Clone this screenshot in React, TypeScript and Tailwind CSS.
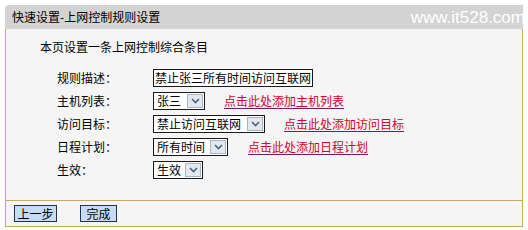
const cjk = "font-['SimSun','Noto_Sans_CJK_SC',sans-serif]";

function Chevron() {
  return (
    <svg width="9" height="6" viewBox="0 0 9 6" fill="none">
      <path d="M1 1l3.5 3.5L8 1" stroke="#4d6185" strokeWidth="1.6" />
    </svg>
  );
}

function FakeSelect({ value, width }: { value: string; width: string }) {
  return (
    <div
      className={`flex h-[18px] items-center justify-between border border-[#1a1a1a] bg-white pl-[3px] pr-px ${width}`}
    >
      <span className="text-[12px] leading-none text-black">{value}</span>
      <span className="flex h-[14px] w-[16px] items-center justify-center border border-[#a7b4c4] bg-[#e3e8ee]">
        <Chevron />
      </span>
    </div>
  );
}

function AddLink({ children, ml }: { children: string; ml: string }) {
  return (
    <a
      href="#"
      className={`${ml} text-[12px] leading-none text-[#d8002a] underline decoration-[#6b1f6f] underline-offset-2`}
    >
      {children}
    </a>
  );
}

function Row({ label, children }: { label: string; children: React.ReactNode }) {
  return (
    <div className="flex h-[23px] items-center">
      <div className="w-[96px] text-[12px] leading-none text-black">{label}</div>
      {children}
    </div>
  );
}

export default function App() {
  return (
    <div className={`min-h-[230px] bg-white pl-[5px] pt-[5px] ${cjk}`}>
      <div className="w-[518px]">
        <div className="flex h-[24px] items-center justify-between rounded-tl-[4px] bg-[#d3d3d3] pl-[7px]">
          <span className="text-[12px] text-black">快速设置-上网控制规则设置</span>
          <span className="mr-[-2px] font-['Liberation_Sans',Arial,sans-serif] text-[17px] leading-none text-white">
            www.it528.com
          </span>
        </div>
        <div className="border-x border-b border-[#c9a86a] bg-[#f5f5f5]">
          <div className="h-[171px] pl-[34px] pt-[9px]">
            <div className="flex h-[18px] items-center text-[12px] text-black">本页设置一条上网控制综合条目</div>
            <div className="mt-[10px] pl-[17px]">
              <Row label="规则描述：">
                <div className="flex h-[18px] w-[160px] items-center overflow-hidden border border-[#1a1a1a] bg-white pl-px text-[12px] leading-none text-black">
                  禁止张三所有时间访问互联网
                </div>
              </Row>
              <Row label="主机列表：">
                <FakeSelect value="张三" width="w-[52px]" />
                <AddLink ml="ml-[19px]">点击此处添加主机列表</AddLink>
              </Row>
              <Row label="访问目标：">
                <FakeSelect value="禁止访问互联网" width="w-[112px]" />
                <AddLink ml="ml-[19px]">点击此处添加访问目标</AddLink>
              </Row>
              <Row label="日程计划：">
                <FakeSelect value="所有时间" width="w-[75px]" />
                <AddLink ml="ml-[20px]">点击此处添加日程计划</AddLink>
              </Row>
              <Row label="生效：">
                <FakeSelect value="生效" width="w-[50px]" />
              </Row>
            </div>
          </div>
          <div className="flex h-[26px] items-center gap-[23px] border-t border-[#c9a86a] pl-[8px]">
            <button className="h-[17px] w-[43px] border border-[#1f3550] bg-[#c6dcf2] text-[12px] leading-none text-black">
              上一步
            </button>
            <button className="h-[17px] w-[37px] border border-[#1f3550] bg-[#c6dcf2] text-[12px] leading-none text-black">
              完成
            </button>
          </div>
        </div>
      </div>
    </div>
  );
}
